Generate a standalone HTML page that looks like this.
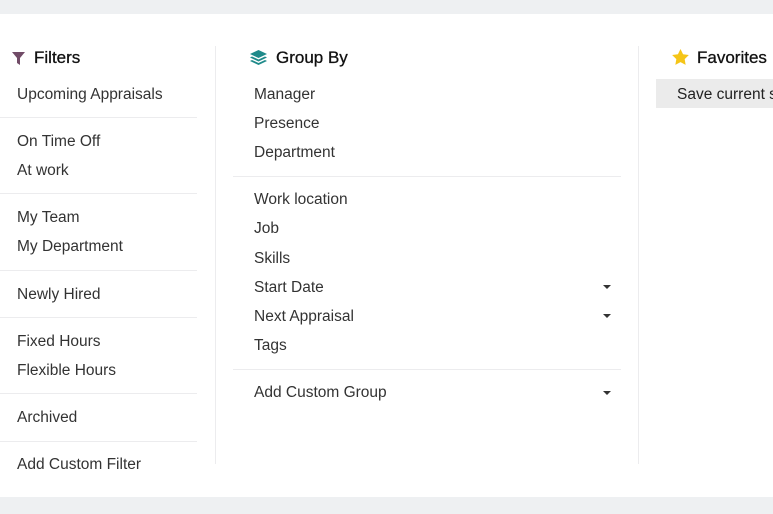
<!DOCTYPE html><html><head><style>
html,body{overflow:hidden;}
body{margin:0;width:773px;height:514px;background:#eef0f2;position:relative;overflow:hidden;font-family:"Liberation Sans",sans-serif;color:#333;}
.p{position:absolute;left:0;top:14px;width:773px;height:483px;background:#fff;}
.t{position:absolute;font-size:15.5px;line-height:18px;white-space:nowrap;}
.h{position:absolute;font-size:17px;line-height:20px;color:#111;white-space:nowrap;-webkit-text-stroke:0.3px #111;}
.s{position:absolute;height:1px;background:#ececee;}
.v{position:absolute;width:1px;background:#ececee;top:46px;height:418px;}
.c{position:absolute;width:0;height:0;border-left:4px solid transparent;border-right:4px solid transparent;border-top:4px solid #333;left:603px;}
</style></head><body>
<div class="p"></div>
<div class="v" style="left:215px"></div><div class="v" style="left:638px"></div>
<svg style="position:absolute;left:12px;top:52px" width="13" height="13" viewBox="0 0 13 13"><path d="M0 0H13L8 6V13L5 11V6Z" fill="#714B67"/></svg>
<div class="h" style="left:34px;top:48px">Filters</div>
<svg style="position:absolute;left:250px;top:50px" width="17" height="16" viewBox="0 0 17 16"><path d="M8.5 0L17 4L8.5 8L0 4Z" fill="#1f8a8a"/><path d="M2 6.5L0 7.5L8.5 11.5L17 7.5L15 6.5L8.5 9.5Z" fill="#1f8a8a"/><path d="M2 10L0 11L8.5 15L17 11L15 10L8.5 13Z" fill="#1f8a8a"/></svg>
<div class="h" style="left:276px;top:48px">Group By</div>
<svg style="position:absolute;left:672px;top:49px" width="17" height="16" viewBox="0 0 24 23"><path d="M12 0l3.7 7.5 8.3 1.2-6 5.8 1.4 8.3L12 18.9 4.6 22.8 6 14.5 0 8.7l8.3-1.2z" fill="#f5c518"/></svg>
<div class="h" style="left:697px;top:48px">Favorites</div>
<div style="position:absolute;left:656px;top:79px;width:117px;height:29px;background:#ebebeb;overflow:hidden"><div class="t" style="left:21px;top:7px;color:#222">Save current search</div></div>

<div class="t" style="left:17px;top:86px">Upcoming Appraisals</div>
<div class="s" style="left:0;width:197px;top:117px"></div>
<div class="t" style="left:17px;top:133px">On Time Off</div>
<div class="t" style="left:17px;top:162px">At work</div>
<div class="s" style="left:0;width:197px;top:193px"></div>
<div class="t" style="left:17px;top:209px">My Team</div>
<div class="t" style="left:17px;top:238px">My Department</div>
<div class="s" style="left:0;width:197px;top:270px"></div>
<div class="t" style="left:17px;top:286px">Newly Hired</div>
<div class="s" style="left:0;width:197px;top:317px"></div>
<div class="t" style="left:17px;top:333px">Fixed Hours</div>
<div class="t" style="left:17px;top:362px">Flexible Hours</div>
<div class="s" style="left:0;width:197px;top:393px"></div>
<div class="t" style="left:17px;top:409px">Archived</div>
<div class="s" style="left:0;width:197px;top:441px"></div>
<div class="t" style="left:17px;top:456px">Add Custom Filter</div>

<div class="t" style="left:254px;top:86px">Manager</div>
<div class="t" style="left:254px;top:115px">Presence</div>
<div class="t" style="left:254px;top:144px">Department</div>
<div class="s" style="left:233px;width:388px;top:176px"></div>
<div class="t" style="left:254px;top:191px">Work location</div>
<div class="t" style="left:254px;top:220px">Job</div>
<div class="t" style="left:254px;top:250px">Skills</div>
<div class="t" style="left:254px;top:279px">Start Date</div><div class="c" style="top:285px"></div>
<div class="t" style="left:254px;top:308px">Next Appraisal</div><div class="c" style="top:314px"></div>
<div class="t" style="left:254px;top:337px">Tags</div>
<div class="s" style="left:233px;width:388px;top:369px"></div>
<div class="t" style="left:254px;top:384px">Add Custom Group</div><div class="c" style="top:391px"></div>
</body></html>
